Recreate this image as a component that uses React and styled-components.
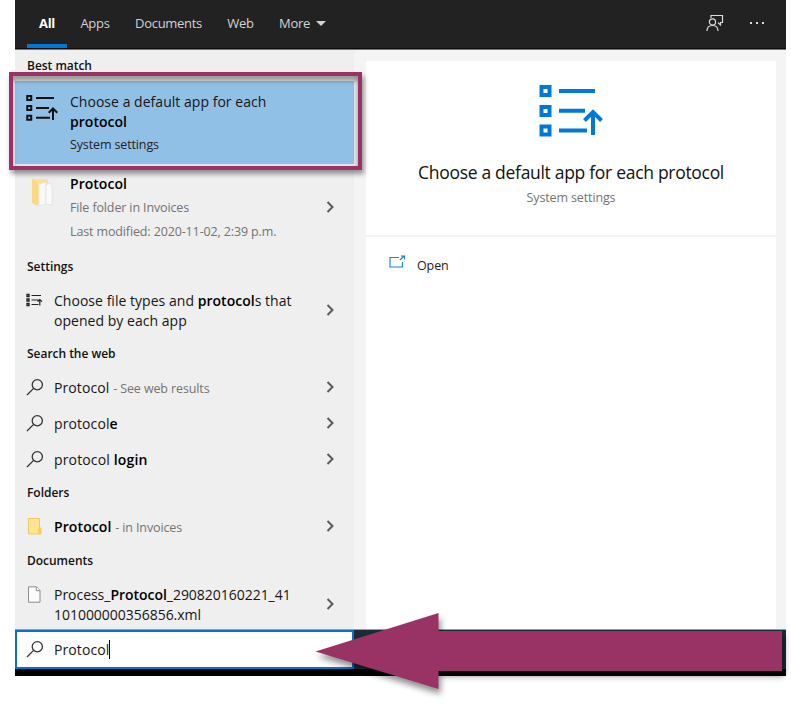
import React from 'react';
import styled, { createGlobalStyle } from 'styled-components';

const GlobalStyle = createGlobalStyle`
  * {
    box-sizing: border-box;
  }
  body {
    margin: 0;
    background: #fff;
    font-family: "Open Sans", "Noto Sans", sans-serif;
  }
`;
const Page = styled.div`
  position: relative;
  width: 791px;
  height: 705px;
  padding-left: 15px;
  overflow: hidden;
`;
const Window = styled.div`
  width: 771px;
  height: 676px;
  display: flex;
  flex-direction: column;
`;
const Header = styled.header`
  display: flex;
  height: 50px;
  padding: 0 21px 0 12px;
  background: #222;
  border-bottom: 1px solid #777;
  box-shadow: inset 0 -1px 0 #0c0c0c;
`;
const Tab = styled.div`
  display: flex;
  align-items: center;
  justify-content: center;
  width: ${props => props.width}px;
  height: 48px;
  padding-top: ${props => props.active ? "2px" : "0"};
  padding-bottom: ${props => props.active ? "0" : "2px"};
  border-bottom: ${props => props.active ? "4px solid #0078d7" : "none"};
  color: ${props => props.active ? "#fff" : "#d2d2d2"};
  font-size: 13px;
  font-weight: ${props => props.active ? "700" : "400"};
  letter-spacing: -0.3px;
  white-space: nowrap;
`;
const Caret = styled.span`
  width: 0;
  margin-left: 6px;
  border: 5px solid transparent;
  border-top: 5px solid #d2d2d2;
  border-bottom: 0;
`;
const HeaderIcons = styled.div`
  display: flex;
  align-items: center;
  gap: 25px;
  height: 46px;
  margin-left: auto;
`;
const Body = styled.div`
  display: flex;
  height: 579px;
  background: #f4f4f4;
`;
const Results = styled.div`
  width: 339px;
  background: #efefef;
`;
const GroupTitle = styled.div`
  height: ${props => props.height}px;
  padding-left: 12px;
  color: #111;
  font-size: 12px;
  font-weight: 600;
  line-height: ${props => props.height}px;
  letter-spacing: -0.03px;
`;
const Row = styled.div`
  display: flex;
  height: ${props => props.height}px;
  padding: ${props => props.top || 0}px 19px 0 11px;
  align-items: ${props => props.top ? "flex-start" : "center"};
  background: ${props => props.selected ? "#91c0e7" : "transparent"};
`;
const IconBox = styled.div`
  display: flex;
  flex: none;
  width: ${props => props.large ? "44px" : "28px"};
  padding-top: ${props => props.top || 0}px;
  padding-bottom: ${props => props.bottom || 0}px;
  padding-left: ${props => props.left || 0}px;
`;
const RowText = styled.div`
  color: #161616;
  font-size: 14px;
  line-height: 20px;
  letter-spacing: ${props => props.track || 0.03}px;
  white-space: nowrap;
  b {
    color: #000;
    font-weight: 600;
  }
`;
const Small = styled.span`
  color: #737373;
  font-size: 12.5px;
  letter-spacing: -0.12px;
`;
const Detail = styled.div`
  color: ${props => props.dark ? "#222" : "#737373"};
  font-size: 12.5px;
  line-height: 23.5px;
  letter-spacing: -0.13px;
`;
const Details = styled.div`
  padding-top: ${props => props.top}px;
`;
const ChevronBox = styled.div`
  display: flex;
  margin-left: auto;
  padding-top: ${props => props.top || 0}px;
  padding-bottom: ${props => props.bottom || 0}px;
`;
const Preview = styled.div`
  width: 410px;
  margin: 11px 0 0 12px;
`;
const PreviewCard = styled.div`
  display: flex;
  flex-direction: column;
  align-items: center;
  height: 174px;
  padding-top: 24px;
  background: #fff;
`;
const PreviewTitle = styled.div`
  margin-top: 22px;
  margin-bottom: 1px;
  color: #111;
  font-size: 17.5px;
  line-height: 26px;
  letter-spacing: -0.3px;
`;
const Actions = styled.div`
  height: 392px;
  margin-top: 2px;
  padding: 15px 0 0 23px;
  background: #fff;
`;
const Action = styled.div`
  display: flex;
  height: 26px;
  align-items: center;
  gap: 11px;
  color: #222;
  font-size: 12.5px;
  letter-spacing: -0.1px;
  svg {
    margin-bottom: 6px;
  }
`;
const Taskbar = styled.div`
  display: flex;
  height: 47px;
  background: #1c2b36;
  border-top: 1px solid #8fa0a9;
  border-bottom: 7px solid #000;
`;
const SearchBox = styled.div`
  display: flex;
  align-items: center;
  width: 339px;
  padding-left: 9px;
  background: #fff;
  border: 2px solid #0872d0;
`;
const Cursor = styled.span`
  width: 1px;
  height: 19px;
  background: #000;
`;
const Highlight = styled.div`
  position: absolute;
  left: 9px;
  top: 72px;
  width: 353px;
  height: 98px;
  border: 4px solid #993366;
  box-shadow: 2px 4px 5px rgba(0, 0, 0, 0.4), inset 0 5px 4px rgba(0, 0, 0, 0.35), inset 2px 0 0 rgba(239, 239, 239, 0.9), inset -4px 0 0 #e3e4e8, inset 0 -2px 0 #e3e4e8;
`;
const Pointer = styled.svg`
  position: absolute;
  left: 300px;
  top: 600px;
  filter: drop-shadow(2px 5px 3px rgba(0, 0, 0, 0.45));
`;

const ListArrow = ({ size, color }) => (
  <svg width={size} height={size * 52 / 64} viewBox="0 0 64 52" fill="none" stroke={color} strokeWidth="4">
    <path d="M2.500 2h8v8h-8zM2.500 22h8v8h-8zM2.500 41.500h8v8h-8z" />
    <path d="M20 6h36M20 25.800h26M20 45.500h28" />
    <path d="M54 50V27M45.500 35.500L54 27l8.500 8.500" />
  </svg>
);

const SmallList = () => (
  <svg width="18" height="14" viewBox="0 0 18 14" fill="none" stroke="#222">
    <path d="M1 1.500h2v2H1zM1 6h2v2H1zM1 10.500h2v2H1z" strokeWidth="1.300" />
    <path d="M5.500 2.500h9.500M5.500 7h7M5.500 11.500h7M13.800 12.500V7M11.600 8.700l2.200-2.200 2.200 2.200" strokeWidth="1.200" />
  </svg>
);

const SearchIcon = () => (
  <svg width="18" height="18" viewBox="0 0 18 18" fill="none" stroke="#333" strokeWidth="1.300">
    <circle cx="11.300" cy="6.700" r="5.100" />
    <path d="M7.600 10.400L1 17" />
  </svg>
);

const Chevron = () => (
  <svg width="9" height="12" viewBox="0 0 9 12" fill="none" stroke="#5a5a5a" strokeWidth="2">
    <path d="M1.500 1l5 5-5 5" />
  </svg>
);

const OpenFolder = () => (
  <svg width="23" height="29" viewBox="0 0 23 29">
    <path d="M0 1h16v25H6L0 24z" fill="#fbe29a" />
    <path d="M7 6l7-2v22l-7 2z" fill="#f8f8f8" stroke="#e2e2e2" strokeWidth=".7" />
    <path d="M14 7l4-2 2 3v19l-6-1z" fill="#fafafa" stroke="#dedede" strokeWidth=".7" />
    <path d="M0 1l6 4v23l-6-3z" fill="#fad980" />
  </svg>
);

const FolderIcon = () => (
  <svg width="15" height="17" viewBox="0 0 15 17">
    <path d="M1.500.500h11v9.500h1.500v6H1.500z" fill="#ffe494" stroke="#edc964" />
    <path d="M11 10.500h3v5.500h-3z" fill="#f6ce5c" />
  </svg>
);

const FileIcon = () => (
  <svg width="14" height="17" viewBox="0 0 14 17" fill="#fbfbfb" stroke="#8c8c8c">
    <path d="M.500.800H8.500L12 4.500v11.700H.500z" />
    <path d="M8.300.800v3.900H12" />
  </svg>
);

const FeedbackIcon = () => (
  <svg width="18" height="18" viewBox="0 0 18 18" fill="none" stroke="#ddd" strokeWidth="1.200">
    <path d="M5 4V1.500h11.500v7h-2v2.500l-2.500-2.300" />
    <circle cx="6.500" cy="8" r="3.100" />
    <path d="M1 17c0-3.500 2.300-5.500 5.500-5.500S12 13.500 12 17" />
  </svg>
);

const DotsIcon = () => (
  <svg width="16" height="4" viewBox="0 0 16 4" fill="#ddd">
    <path d="M1 1h2v2H1zM7 1h2v2H7zM13 1h2v2h-2z" />
  </svg>
);

const OpenIcon = () => (
  <svg width="17" height="14" viewBox="0 0 17 14" fill="none" stroke="#1c82dc" strokeWidth="1.200">
    <path d="M10 2.500H1v9.500h12.500V7M11 5l4-4M12 1h3.500v3.500" />
  </svg>
);

const App = () => {
  return (
    <>
      <GlobalStyle />
      <Page>
        <Window>
          <Header>
            <Tab active width={40}>All</Tab>
            <Tab width={56}>Apps</Tab>
            <Tab width={91}>Documents</Tab>
            <Tab width={53}>Web</Tab>
            <Tab width={71}>More<Caret /></Tab>
            <HeaderIcons>
              <FeedbackIcon />
              <DotsIcon />
            </HeaderIcons>
          </Header>
          <Body>
            <Results>
              <GroupTitle height={31}>Best match</GroupTitle>
              <Row height={83} top={11} selected>
                <IconBox large top={3}><ListArrow size={32} color="#111" /></IconBox>
                <div>
                  <RowText>Choose a default app for each<br /><b>protocol</b></RowText>
                  <Details top={1}>
                    <Detail dark>System settings</Detail>
                  </Details>
                </div>
              </Row>
              <Row height={86} top={10}>
                <IconBox large top={4} left={6}><OpenFolder /></IconBox>
                <div>
                  <RowText><b>Protocol</b></RowText>
                  <Details top={2}>
                    <Detail>File folder in Invoices</Detail>
                    <Detail>Last modified: 2020-11-02, 2:39 p.m.</Detail>
                  </Details>
                </div>
                <ChevronBox top={27}><Chevron /></ChevronBox>
              </Row>
              <GroupTitle height={34}>Settings</GroupTitle>
              <Row height={54}>
                <IconBox bottom={23}><SmallList /></IconBox>
                <RowText>Choose file types and <b>protocol</b>s that<br />opened by each app</RowText>
                <ChevronBox bottom={2}><Chevron /></ChevronBox>
              </Row>
              <GroupTitle height={32}>Search the web</GroupTitle>
              <Row height={36}>
                <IconBox bottom={2}><SearchIcon /></IconBox>
                <RowText track={0.1}>Protocol <Small>- See web results</Small></RowText>
                <ChevronBox bottom={2}><Chevron /></ChevronBox>
              </Row>
              <Row height={36}>
                <IconBox bottom={2}><SearchIcon /></IconBox>
                <RowText track={0.1}>protocol<b>e</b></RowText>
                <ChevronBox bottom={2}><Chevron /></ChevronBox>
              </Row>
              <Row height={36}>
                <IconBox bottom={2}><SearchIcon /></IconBox>
                <RowText track={0.15}>protocol <b>login</b></RowText>
                <ChevronBox bottom={2}><Chevron /></ChevronBox>
              </Row>
              <GroupTitle height={30}>Folders</GroupTitle>
              <Row height={38}>
                <IconBox left={1} bottom={2}><FolderIcon /></IconBox>
                <RowText track={0.1}><b>Protocol</b> <Small>- in Invoices</Small></RowText>
                <ChevronBox bottom={2}><Chevron /></ChevronBox>
              </Row>
              <GroupTitle height={30}>Documents</GroupTitle>
              <Row height={53} top={9}>
                <IconBox left={2} top={1}><FileIcon /></IconBox>
                <RowText track={-0.03}>Process_<b>Protocol</b>_290820160221_41<br />101000000356856.xml</RowText>
                <ChevronBox top={13}><Chevron /></ChevronBox>
              </Row>
            </Results>
            <Preview>
              <PreviewCard>
                <ListArrow size={64} color="#0078d7" />
                <PreviewTitle>Choose a default app for each protocol</PreviewTitle>
                <Detail>System settings</Detail>
              </PreviewCard>
              <Actions>
                <Action><OpenIcon />Open</Action>
              </Actions>
            </Preview>
          </Body>
          <Taskbar>
            <SearchBox>
              <IconBox bottom={2}><SearchIcon /></IconBox>
              <RowText track={0.1}>Protocol</RowText>
              <Cursor />
            </SearchBox>
          </Taskbar>
        </Window>
        <Highlight />
        <Pointer width="491" height="105" viewBox="0 0 491 105">
          <path d="M15.500 51.500L138.500 13v18H482v40H138.500v18z" fill="#993366" />
        </Pointer>
      </Page>
    </>
  );
};

export default App;
